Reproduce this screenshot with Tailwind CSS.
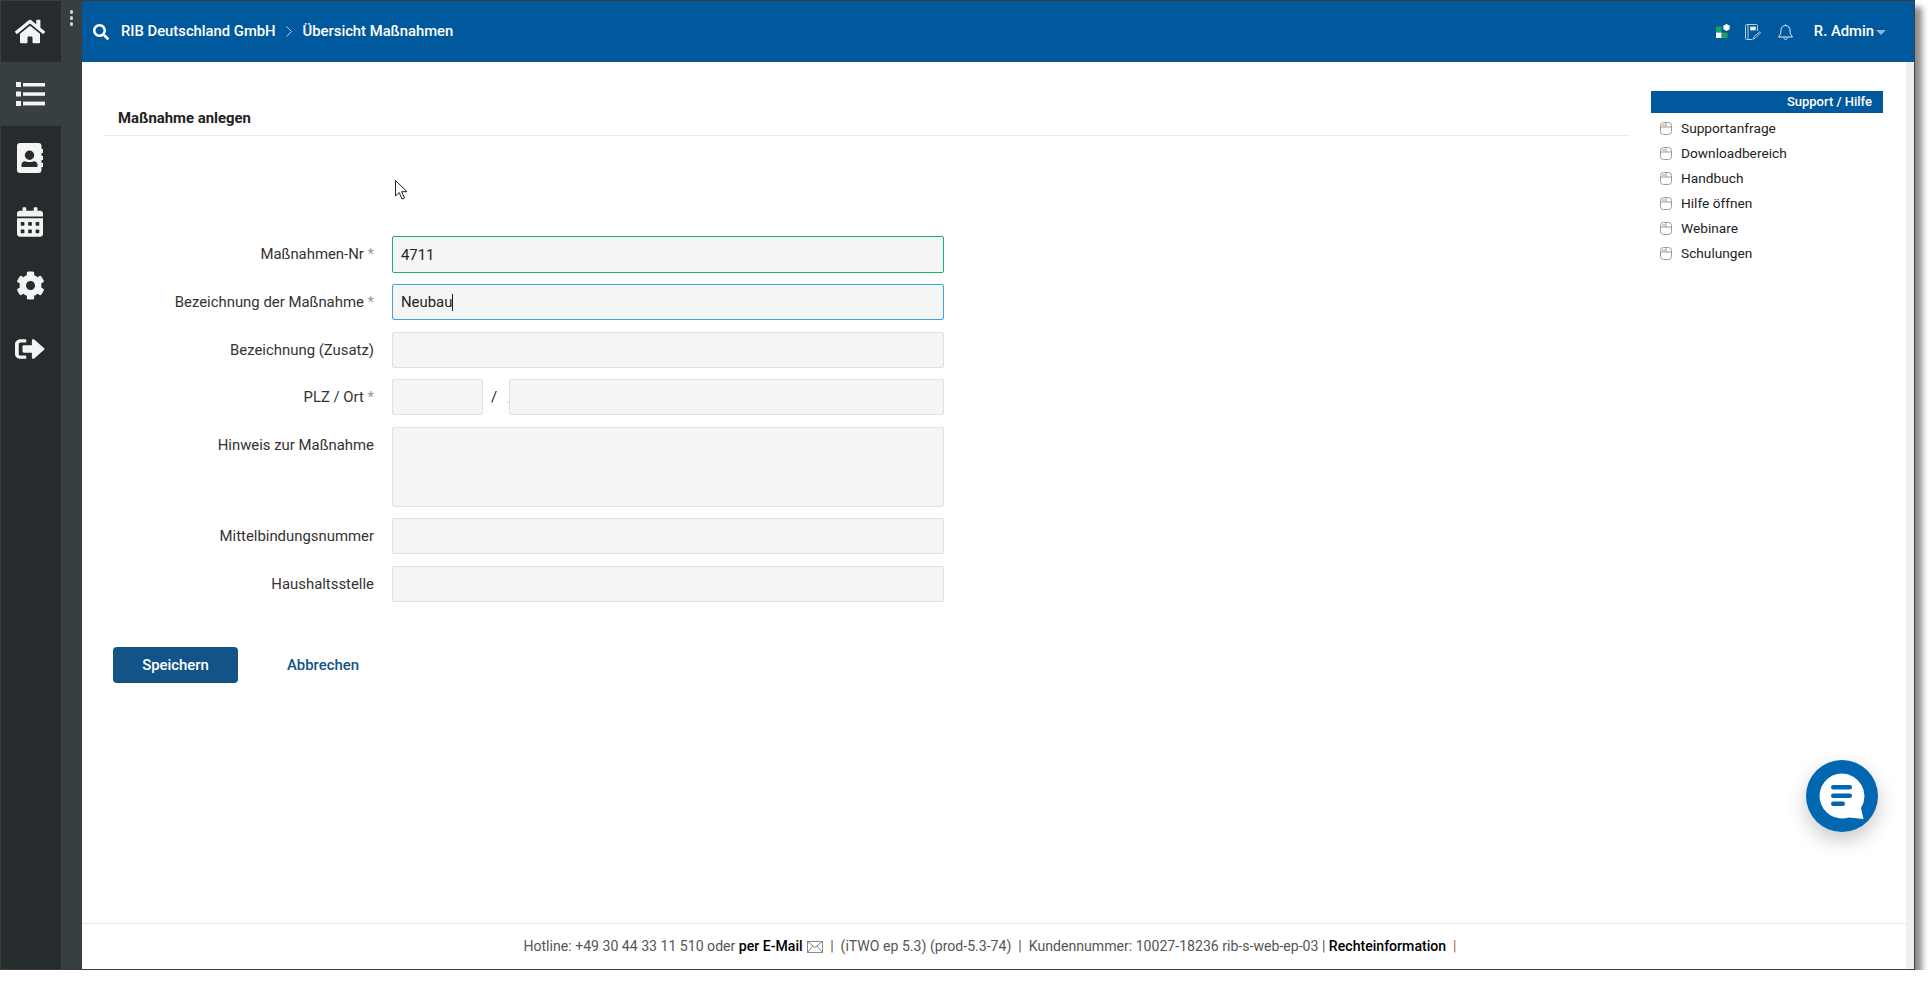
<!DOCTYPE html>
<html lang="de">
<head>
<meta charset="utf-8">
<title>Maßnahme anlegen</title>
<script src="https://cdn.jsdelivr.net/npm/@tailwindcss/browser@4"></script>
</head>
<body class="bg-white overflow-hidden font-['Roboto',sans-serif] text-[14.9px] text-[#333]">
<div class="relative flex w-[1915px] h-[970px] border border-[#3c3c3c] bg-white shadow-[7px_7px_6px_rgba(0,0,0,0.45)]">
  <!-- sidebar -->
  <nav class="flex w-[81px] shrink-0 bg-[#373f41]">
    <div class="flex flex-col w-[60px] shrink-0 bg-[#262c2e] text-[#f4f4f4]">
      <a class="flex items-center justify-center h-[61px] pr-[2px]">
        <svg class="w-[30px] h-[27px]" viewBox="0 0 576 512" fill="currentColor"><path d="M280.37 148.26L96 300.11V464a16 16 0 0 0 16 16l112.06-.29a16 16 0 0 0 15.92-16V368a16 16 0 0 1 16-16h64a16 16 0 0 1 16 16v95.64a16 16 0 0 0 16 16.05L464 480a16 16 0 0 0 16-16V300L295.67 148.26a12.19 12.19 0 0 0-15.3 0zM571.6 251.47L488 182.56V44.05a12 12 0 0 0-12-12h-56a12 12 0 0 0-12 12v72.61L318.47 43a48 48 0 0 0-61 0L4.34 251.47a12 12 0 0 0-1.6 16.9l25.5 31A12 12 0 0 0 45.15 301l235.22-193.74a12.19 12.19 0 0 1 15.3 0L530.9 301a12 12 0 0 0 16.9-1.6l25.5-31a12 12 0 0 0-1.7-16.93z"/></svg>
      </a>
      <a class="flex items-center justify-center h-[64px] pr-[2px] bg-[#373f41]">
        <svg class="w-[29px] h-[24px]" viewBox="0 0 29 24" fill="currentColor"><rect x="0" y="0" width="5" height="5"/><rect x="7" y="1" width="22" height="3.5"/><rect x="0" y="9.5" width="5" height="5"/><rect x="7" y="10.3" width="22" height="3.5"/><rect x="0" y="19" width="5" height="5"/><rect x="7" y="19.6" width="22" height="3.8"/></svg>
      </a>
      <a class="flex items-center justify-center h-[64px] pr-[2px]">
        <svg class="w-[26px] h-[30px]" viewBox="0 0 26 30" fill="currentColor"><path fill-rule="evenodd" d="M3 0H21.500a3 3 0 0 1 3 3V6H26V10H24.500V13H26V17H24.500V20H26V24H24.500V27a3 3 0 0 1-3 3H3a3 3 0 0 1-3-3V3a3 3 0 0 1 3-3ZM12.500 7.500a4.700 4.700 0 1 0 0 9.400a4.700 4.700 0 1 0 0-9.400ZM8 18.200c-2 0-3.500 1.600-3.500 3.500V24h16v-2.300c0-1.900-1.500-3.500-3.500-3.500c-1.600.5-3 .9-4.500.9s-2.900-.4-4.500-.9Z"/></svg>
      </a>
      <a class="flex items-center justify-center h-[63.500px] pr-[2px]">
        <svg class="w-[26px] h-[30px]" viewBox="0 0 448 512" fill="currentColor"><path d="M0 464c0 26.500 21.500 48 48 48h352c26.500 0 48-21.500 48-48V192H0v272zm320-196c0-6.600 5.400-12 12-12h40c6.600 0 12 5.400 12 12v40c0 6.600-5.400 12-12 12h-40c-6.600 0-12-5.400-12-12v-40zm0 128c0-6.600 5.400-12 12-12h40c6.600 0 12 5.400 12 12v40c0 6.600-5.400 12-12 12h-40c-6.600 0-12-5.400-12-12v-40zM192 268c0-6.600 5.400-12 12-12h40c6.600 0 12 5.400 12 12v40c0 6.600-5.400 12-12 12h-40c-6.600 0-12-5.400-12-12v-40zm0 128c0-6.600 5.400-12 12-12h40c6.600 0 12 5.400 12 12v40c0 6.600-5.400 12-12 12h-40c-6.600 0-12-5.400-12-12v-40zM64 268c0-6.600 5.400-12 12-12h40c6.600 0 12 5.400 12 12v40c0 6.600-5.400 12-12 12H76c-6.600 0-12-5.400-12-12v-40zm0 128c0-6.600 5.400-12 12-12h40c6.600 0 12 5.400 12 12v40c0 6.600-5.400 12-12 12H76c-6.600 0-12-5.400-12-12v-40zM400 64h-48V16c0-8.800-7.200-16-16-16h-32c-8.800 0-16 7.200-16 16v48H160V16c0-8.800-7.200-16-16-16h-32c-8.800 0-16 7.200-16 16v48H48C21.500 64 0 85.500 0 112v48h448v-48c0-26.500-21.500-48-48-48z"/></svg>
      </a>
      <a class="flex items-center justify-center h-[63.500px] pr-[2px]">
        <svg class="w-[29px] h-[29px]" viewBox="0 0 512 512" fill="currentColor"><path d="M487.4 315.7l-42.6-24.6c4.3-23.2 4.3-47 0-70.2l42.6-24.6c4.9-2.8 7.1-8.6 5.500-14-11.1-35.6-30-67.8-54.7-94.6-3.8-4.1-10-5.1-14.8-2.3L380.8 110c-17.9-15.4-38.5-27.3-60.8-35.1V25.8c0-5.6-3.9-10.5-9.4-11.7-36.7-8.2-74.3-7.8-109.2 0-5.500 1.2-9.4 6.1-9.4 11.7V75c-22.2 7.9-42.8 19.8-60.8 35.1L88.7 85.5c-4.9-2.8-11-1.9-14.8 2.3-24.7 26.7-43.6 58.9-54.7 94.6-1.7 5.4.6 11.2 5.500 14L67.3 221c-4.3 23.2-4.3 47 0 70.2l-42.6 24.6c-4.9 2.8-7.1 8.6-5.500 14 11.1 35.6 30 67.8 54.7 94.6 3.8 4.1 10 5.1 14.8 2.3l42.6-24.6c17.9 15.4 38.5 27.3 60.8 35.1v49.2c0 5.6 3.9 10.5 9.4 11.7 36.7 8.2 74.3 7.8 109.2 0 5.500-1.2 9.4-6.1 9.4-11.7v-49.2c22.2-7.9 42.8-19.8 60.8-35.1l42.6 24.6c4.9 2.8 11 1.9 14.8-2.3 24.7-26.7 43.6-58.9 54.7-94.6 1.5-5.500-.7-11.3-5.6-14.1zM256 336c-44.1 0-80-35.9-80-80s35.9-80 80-80 80 35.9 80 80-35.9 80-80 80z"/></svg>
      </a>
      <a class="flex items-center justify-center h-[63.500px] pr-[2px]">
        <svg class="w-[30px] h-[26px]" viewBox="0 0 512 512" preserveAspectRatio="none" fill="currentColor"><path d="M180 448H96c-53 0-96-43-96-96V160c0-53 43-96 96-96h84c6.600 0 12 5.400 12 12v40c0 6.600-5.400 12-12 12H96c-17.700 0-32 14.300-32 32v192c0 17.700 14.300 32 32 32h84c6.600 0 12 5.400 12 12v40c0 6.600-5.400 12-12 12z"/><path d="M497 273L329 441c-15 15-41 4.500-41-17v-96H152c-13.300 0-24-10.700-24-24v-96c0-13.300 10.700-24 24-24h136V88c0-21.400 25.900-32 41-17l168 168c9.300 9.400 9.300 24.600 0 34z"/></svg>
      </a>
    </div>
    <div class="flex flex-1 flex-col items-center gap-[2.500px] pt-[9px]">
      <span class="w-[3.500px] h-[3.500px] rounded-full bg-[#d6d6d6]"></span>
      <span class="w-[3.500px] h-[3.500px] rounded-full bg-[#d6d6d6]"></span>
      <span class="w-[3.500px] h-[3.500px] rounded-full bg-[#d6d6d6]"></span>
    </div>
  </nav>

  <div class="flex flex-col flex-1 min-w-0">
    <!-- top bar -->
    <header class="flex items-center h-[61px] shrink-0 bg-[#00599d] text-white font-medium text-[14.8px]">
      <svg class="w-[16px] h-[16px] ml-[11px] mr-[12px]" viewBox="0 0 512 512" fill="currentColor"><path d="M505 442.700L405.300 343c-4.500-4.500-10.600-7-17-7H372c27.600-35.300 44-79.700 44-128C416 93.100 322.900 0 208 0S0 93.100 0 208s93.100 208 208 208c48.300 0 92.700-16.400 128-44v16.300c0 6.400 2.500 12.500 7 17l99.700 99.700c9.400 9.400 24.600 9.400 33.900 0l28.300-28.300c9.400-9.400 9.400-24.600.1-34zM208 336c-70.700 0-128-57.200-128-128 0-70.700 57.200-128 128-128 70.700 0 128 57.200 128 128 0 70.700-57.200 128-128 128z"/></svg>
      <span>RIB Deutschland GmbH</span>
      <svg class="w-[6px] h-[11px] mx-[10.500px] text-[#b9cfe3]" viewBox="0 0 6 11" fill="none" stroke="currentColor" stroke-width="1"><path d="M.5.500l5 5-5 5"/></svg>
      <span>Übersicht Maßnahmen</span>
      <div class="flex items-center ml-auto mr-[28px]">
        <svg class="w-[14px] h-[15px]" viewBox="0 0 14 15"><rect x="0" y="2.500" width="5.500" height="5.500" fill="#1aa35f"/><rect x="0" y="8.500" width="5.500" height="5.500" fill="#ffffff"/><rect x="6" y="8.500" width="5.500" height="5.500" fill="#1aa35f"/><path d="M10.500 0l3.200 1.800v3.400L10.500 7 7.300 5.200V1.800z" fill="#ffffff"/></svg>
        <svg class="w-[16px] h-[16px] ml-[15px]" viewBox="0 0 16 16" fill="none" stroke="#b7cde0" stroke-width="1"><path d="M12.500 7V1.500a1 1 0 0 0-1-1h-10a1 1 0 0 0-1 1v13a1 1 0 0 0 1 1h6"/><path d="M3 .5v15"/><rect x="5.500" y="3" width="5" height="3" fill="#ffffff" stroke="#b7cde0"/><path d="M14.500 7.800l1 1-5.500 5.500-2 .8.700-2z"/></svg>
        <svg class="w-[15px] h-[16px] ml-[17px]" viewBox="0 0 15 16" fill="none" stroke="#e4edf5" stroke-width="1"><path d="M7.500 1.500c-3 0-4.500 2.200-4.500 4.800 0 3.500-1 5-2.500 6.700h14c-1.500-1.700-2.500-3.200-2.500-6.700 0-2.600-1.500-4.800-4.500-4.800zM7.500 1.500V.5M5.800 13.500c0 1.200.8 2 1.700 2s1.700-.8 1.700-2"/></svg>
        <span class="ml-[21px]">R. Admin</span>
        <span class="ml-[2px] mt-[2px] w-0 h-0 border-x-[5px] border-x-transparent border-t-[5px] border-t-[#8fb3d3]"></span>
      </div>
    </header>

    <div class="flex flex-1 min-h-0">
      <div class="flex flex-col flex-1 min-w-0">
        <div class="flex flex-1 min-h-0">
          <!-- main -->
          <main class="flex-1 min-w-0 pl-[22px] pr-[20px]">
            <h1 class="h-[74px] pt-[46px] pl-[14px] font-bold text-[14.9px] leading-[20px] text-[#222] border-b border-[#eaeaea]">Maßnahme anlegen</h1>
            <form class="flex flex-col pt-[100px]">
              <div class="flex items-center h-[37px] mb-[11px]">
                <label class="w-[270px] text-right">Maßnahmen-Nr <span class="text-[#999]">*</span></label>
                <input value="4711" class="ml-[18px] w-[552px] h-full px-[8px] bg-[#f5f5f5] border border-[#18b26b] rounded-[2px] text-[#222]">
              </div>
              <div class="flex items-center h-[36px] mb-[12px]">
                <label class="w-[270px] text-right">Bezeichnung der Maßnahme <span class="text-[#999]">*</span></label>
                <div class="flex items-center ml-[18px] w-[552px] h-full px-[8px] bg-[#f5f5f5] border border-[#3ea0e6] rounded-[2px] text-[#222]">Neubau<span class="w-px h-[17px] bg-[#222]"></span></div>
              </div>
              <div class="flex items-center h-[36px] mb-[11px]">
                <label class="w-[270px] text-right">Bezeichnung (Zusatz)</label>
                <input class="ml-[18px] w-[552px] h-full bg-[#f5f5f5] border border-[#e0e0e0] rounded-[2px]">
              </div>
              <div class="flex items-center h-[36px] mb-[12px]">
                <label class="w-[270px] text-right">PLZ / Ort <span class="text-[#999]">*</span></label>
                <input class="ml-[18px] w-[91px] h-full bg-[#f5f5f5] border border-[#e0e0e0] rounded-[2px]">
                <span class="flex items-end w-[26px] pl-[8px] gap-[10px] text-[#222]">/<span class="w-px h-px mb-[5px] bg-[#f0a040]"></span></span>
                <input class="w-[435px] h-full bg-[#f5f5f5] border border-[#e0e0e0] rounded-[2px]">
              </div>
              <div class="flex items-start h-[80px] mb-[11px]">
                <label class="w-[270px] pt-[7px] text-right">Hinweis zur Maßnahme</label>
                <textarea class="ml-[18px] w-[552px] h-full bg-[#f5f5f5] border border-[#e0e0e0] rounded-[2px] resize-none"></textarea>
              </div>
              <div class="flex items-center h-[36px] mb-[12px]">
                <label class="w-[270px] text-right">Mittelbindungsnummer</label>
                <input class="ml-[18px] w-[552px] h-full bg-[#f5f5f5] border border-[#e0e0e0] rounded-[2px]">
              </div>
              <div class="flex items-center h-[36px]">
                <label class="w-[270px] text-right">Haushaltsstelle</label>
                <input class="ml-[18px] w-[552px] h-full bg-[#f5f5f5] border border-[#e0e0e0] rounded-[2px]">
              </div>
              <div class="flex items-center mt-[45px] ml-[9px]">
                <button type="button" class="w-[125px] h-[36px] bg-[#135488] rounded-[4px] text-white font-medium">Speichern</button>
                <a class="ml-[49px] text-[#135488] font-medium">Abbrechen</a>
              </div>
            </form>
          </main>
          <!-- support -->
          <aside class="w-[256px] shrink-0 pt-[29px] pl-[1px]">
            <div class="w-[232px] h-[22px] pr-[11px] bg-[#00599d] text-white text-right font-medium text-[13px] leading-[22px]">Support / Hilfe</div>
            <ul class="pt-[3px] text-[13.7px] text-[#222]">
              <li class="flex items-center h-[25px] pl-[9px]"><svg class="w-[12px] h-[13px] mr-[9px]" viewBox="0 0 12 13"><rect x=".5" y=".5" width="11" height="12" rx="3" fill="#fff" stroke="#9a9a9a"/><path d="M1 5h10M6 .5V5" stroke="#9a9a9a" fill="none"/><rect x="2" y="2" width="3" height="2.500" fill="#f6c39c"/></svg>Supportanfrage</li>
              <li class="flex items-center h-[25px] pl-[9px]"><svg class="w-[12px] h-[13px] mr-[9px]" viewBox="0 0 12 13"><rect x=".5" y=".5" width="11" height="12" rx="3" fill="#fff" stroke="#9a9a9a"/><path d="M1 5h10M6 .5V5" stroke="#9a9a9a" fill="none"/><rect x="2" y="2" width="3" height="2.500" fill="#f6c39c"/></svg>Downloadbereich</li>
              <li class="flex items-center h-[25px] pl-[9px]"><svg class="w-[12px] h-[13px] mr-[9px]" viewBox="0 0 12 13"><rect x=".5" y=".5" width="11" height="12" rx="3" fill="#fff" stroke="#9a9a9a"/><path d="M1 5h10M6 .5V5" stroke="#9a9a9a" fill="none"/><rect x="2" y="2" width="3" height="2.500" fill="#f6c39c"/></svg>Handbuch</li>
              <li class="flex items-center h-[25px] pl-[9px]"><svg class="w-[12px] h-[13px] mr-[9px]" viewBox="0 0 12 13"><rect x=".5" y=".5" width="11" height="12" rx="3" fill="#fff" stroke="#9a9a9a"/><path d="M1 5h10M6 .5V5" stroke="#9a9a9a" fill="none"/><rect x="2" y="2" width="3" height="2.500" fill="#f6c39c"/></svg>Hilfe öffnen</li>
              <li class="flex items-center h-[25px] pl-[9px]"><svg class="w-[12px] h-[13px] mr-[9px]" viewBox="0 0 12 13"><rect x=".5" y=".5" width="11" height="12" rx="3" fill="#fff" stroke="#9a9a9a"/><path d="M1 5h10M6 .5V5" stroke="#9a9a9a" fill="none"/><rect x="2" y="2" width="3" height="2.500" fill="#f6c39c"/></svg>Webinare</li>
              <li class="flex items-center h-[25px] pl-[9px]"><svg class="w-[12px] h-[13px] mr-[9px]" viewBox="0 0 12 13"><rect x=".5" y=".5" width="11" height="12" rx="3" fill="#fff" stroke="#9a9a9a"/><path d="M1 5h10M6 .5V5" stroke="#9a9a9a" fill="none"/><rect x="2" y="2" width="3" height="2.500" fill="#f6c39c"/></svg>Schulungen</li>
            </ul>
          </aside>
        </div>
        <!-- footer -->
        <footer class="flex items-center justify-center h-[46px] pr-[8px] shrink-0 border-t border-[#e5e5e5] text-[14.1px] text-[#555]">
          <span>Hotline: +49 30 44 33 11 510 oder <b class="font-medium text-black">per E-Mail</b></span>
          <svg class="w-[16px] h-[12px] mx-[4px]" viewBox="0 0 16 12" fill="none" stroke="#888" stroke-width="1"><rect x=".5" y=".5" width="15" height="11"/><path d="M.5.500l7.500 6 7.500-6M.5 11.500l5.500-6.500M15.500 11.500l-5.500-6.500"/></svg>
          <span>&nbsp;|&nbsp; (iTWO ep 5.3) (prod-5.3-74) &nbsp;|&nbsp; Kundennummer: 10027-18236 rib-s-web-ep-03 | <b class="font-medium text-black">Rechteinformation</b> &nbsp;<span class="text-[#b5651d]">|</span></span>
        </footer>
      </div>
      <div class="w-[8px] shrink-0 bg-[#f0f0f0]"></div>
    </div>
  </div>

  <!-- mouse cursor -->
  <svg class="absolute left-[394px] top-[179px] w-[13px] h-[20px]" viewBox="0 0 13 20"><path d="M.5.500v15.500l3.700-3.500 2.800 6.500 2.500-1-2.800-6.300h5.300z" fill="#fff" stroke="#222" stroke-width="1"/></svg>

  <!-- chat -->
  <div class="absolute left-[1805px] top-[759px] flex items-center justify-center w-[72px] h-[72px] rounded-full bg-[#0067b0] shadow-[0_8px_20px_rgba(0,0,0,0.22)]">
    <svg class="w-[46px] h-[46px]" viewBox="0 0 46 46"><path d="M23 .5a22.500 22.500 0 1 0 7 43.900l14.500 1.600-2.500-11A22.500 22.500 0 0 0 23 .5z" fill="#fff"/><g fill="#0067b0"><rect x="12" y="12" width="21" height="4.500" rx="2.200"/><rect x="12" y="20.500" width="21" height="4.500" rx="2.200"/><rect x="12" y="28.500" width="14" height="4.500" rx="2.200"/></g></svg>
  </div>
</div>
</body>
</html>
